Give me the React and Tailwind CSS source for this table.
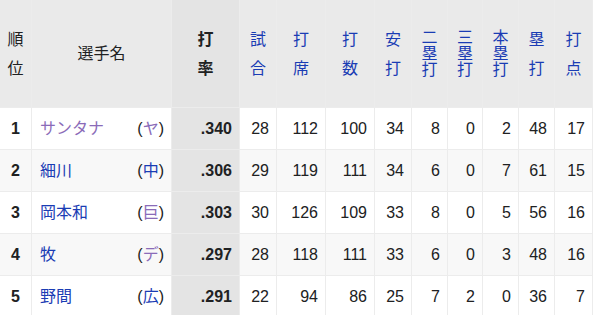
import React from 'react';

const cols = 'grid grid-cols-[32px_140px_68px_37px_49px_49px_37px_36px_35px_36px_36px_38px]';

const players = [
    { rank: 1, name: 'サンタナ', team: 'ヤ', nameVisited: true, teamVisited: true, avg: '.340', stats: [28, 112, 100, 34, 8, 0, 2, 48, 17] },
    { rank: 2, name: '細川', team: '中', avg: '.306', stats: [29, 119, 111, 34, 6, 0, 7, 61, 15] },
    { rank: 3, name: '岡本和', team: '巨', teamVisited: true, avg: '.303', stats: [30, 126, 109, 33, 8, 0, 5, 56, 16] },
    { rank: 4, name: '牧', team: 'デ', teamVisited: true, avg: '.297', stats: [28, 118, 111, 33, 6, 0, 3, 48, 16] },
    { rank: 5, name: '野間', team: '広', avg: '.291', stats: [22, 94, 86, 25, 7, 2, 0, 36, 7] },
];

// ヘッダー：2文字は間隔広め、3文字は詰める
const statHeads = [
    ['試', '合'], ['打', '席'], ['打', '数'], ['安', '打'],
    ['二', '塁', '打'], ['三', '塁', '打'], ['本', '塁', '打'],
    ['塁', '打'], ['打', '点'],
];

const cell = 'border-r border-b border-[#ececec]';

const App = () => {
    return (
        <div className="w-[595px] h-[315px] overflow-hidden bg-white font-['Liberation_Sans','Noto_Sans_CJK_JP',sans-serif] text-[16px] text-[#202122]">
            <div className="w-[593px]">
                <div className={`${cols} h-[108px] bg-[#eaeaea]`}>
                    <div className={`${cell} flex flex-col items-center justify-center leading-[29px]`}>
                        <span>順</span><span>位</span>
                    </div>
                    <div className={`${cell} flex items-center justify-center`}>選手名</div>
                    <div className={`${cell} bg-[#e4e4e4] flex flex-col items-center justify-center leading-[29px] font-bold`}>
                        <span>打</span><span>率</span>
                    </div>
                    {statHeads.map((h, i) => (
                        <div
                            key={i}
                            className={`${cell} flex flex-col items-center justify-center text-[#1a3cb4] ${h.length === 3 ? 'leading-[16px]' : 'leading-[29px]'}`}
                        >
                            {h.map((c, j) => <span key={j}>{c}</span>)}
                        </div>
                    ))}
                </div>

                {players.map((p) => (
                    <div key={p.rank} className={`${cols} h-[42px] ${p.rank % 2 === 0 ? 'bg-[#f8f8f8]' : 'bg-white'}`}>
                        <div className={`${cell} flex items-center justify-center font-bold`}>{p.rank}</div>
                        <div className={`${cell} flex items-center justify-between pl-2 pr-[7px]`}>
                            <span className={p.nameVisited ? 'text-[#8a6bb8]' : 'text-[#1a3cb4]'}>{p.name}</span>
                            <span>
                                (<span className={p.teamVisited ? 'text-[#8a6bb8]' : 'text-[#1a3cb4]'}>{p.team}</span>)
                            </span>
                        </div>
                        <div className={`${cell} bg-[#e4e4e4] flex items-center justify-end pr-[7px] font-bold`}>{p.avg}</div>
                        {p.stats.map((s, i) => (
                            <div key={i} className={`${cell} flex items-center justify-end pr-[7px]`}>{s}</div>
                        ))}
                    </div>
                ))}
            </div>
        </div>
    );
};

export default App;
